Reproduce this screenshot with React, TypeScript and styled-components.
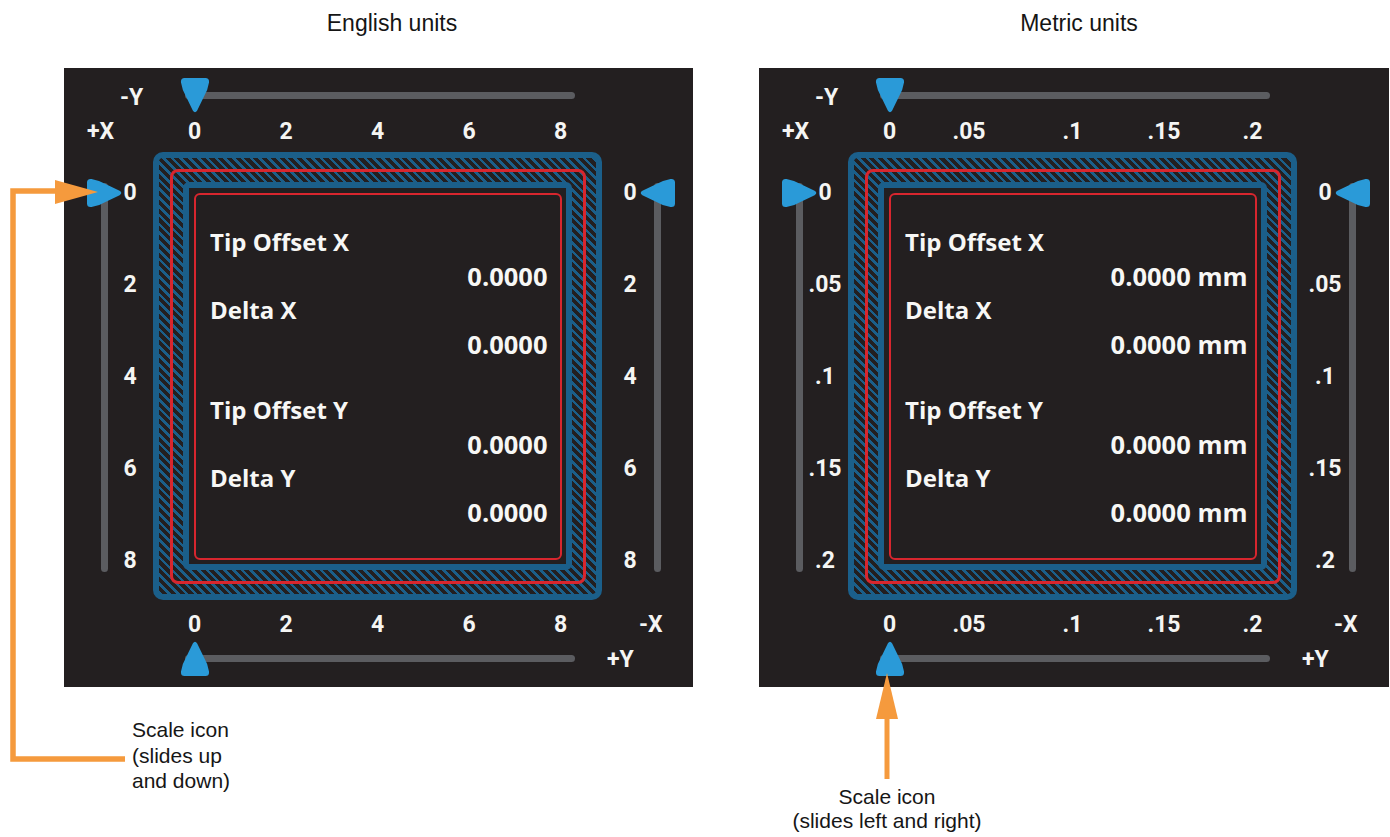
import React from 'react';
import styled, { createGlobalStyle } from 'styled-components';

const GlobalStyle = createGlobalStyle`
  html, body { margin: 0; padding: 0; background: #ffffff; }
  body {
    width: 1390px;
    height: 837px;
    overflow: hidden;
    font-family: "Liberation Sans", Arial, sans-serif;
  }
`;

const PANEL_BG = '#231f20';
const FRAME_BLUE = '#1b5f8a';
const RED = '#d8262e';
const THUMB_BLUE = '#2a9ad8';
const TRACK = '#5b5c60';
const ORANGE = '#f59a3d';

const Page = styled.main`
  position: relative;
  width: 1390px;
  height: 837px;
  box-sizing: border-box;
  padding-left: 64px;
  display: flex;
  gap: 66px;
`;

const Figure = styled.section<{ $w: number }>`
  width: ${(p) => p.$w}px;
  display: flex;
  flex-direction: column;
`;

const Title = styled.h2<{ $pad: number }>`
  margin: 10px 0 0;
  padding-left: ${(p) => p.$pad}px;
  font: 400 23px/26px "Liberation Sans", Arial, sans-serif;
  color: #151515;
  text-align: center;
`;

const Panel = styled.div`
  margin-top: 32px;
  height: 619px;
  background: ${PANEL_BG};
  display: grid;
  grid-template-columns: 47px 42px 449px 52px 1fr;
  grid-template-rows: 40px 44px 448px 44px 43px;
  font-family: Roboto, "Noto Sans", sans-serif;
  color: #f5f5f3;
`;

const AxisTag = styled.div<{ $col: string; $row: number; $ml: number; $mt: number }>`
  grid-column: ${(p) => p.$col};
  grid-row: ${(p) => p.$row};
  justify-self: start;
  align-self: start;
  margin-left: ${(p) => p.$ml}px;
  margin-top: ${(p) => p.$mt}px;
  font-size: 23px;
  line-height: 26px;
  font-weight: 700;
  white-space: nowrap;
`;

const TickRow = styled.div<{ $row: number; $mt: number }>`
  grid-column: 3;
  grid-row: ${(p) => p.$row};
  align-self: start;
  margin-top: ${(p) => p.$mt}px;
  margin-left: 16.5px;
  width: 416px;
  display: flex;
  justify-content: space-between;
`;

const TickCol = styled.div<{ $col: number; $pl: number; $pr: number }>`
  grid-column: ${(p) => p.$col};
  grid-row: 3;
  padding-top: 27.5px;
  padding-left: ${(p) => p.$pl}px;
  padding-right: ${(p) => p.$pr}px;
  height: 394px;
  display: flex;
  flex-direction: column;
  justify-content: space-between;
  align-items: center;
`;

const Tick = styled.span<{ $shift?: number }>`
  display: block;
  width: 50px;
  height: 26px;
  text-align: center;
  font-size: 23px;
  line-height: 26px;
  font-weight: 700;
  white-space: nowrap;
  transform: translateX(${(p) => p.$shift ?? 0}px);
`;

const HTrack = styled.div<{ $row: number; $mt: number }>`
  grid-column: 3;
  grid-row: ${(p) => p.$row};
  align-self: start;
  justify-self: start;
  position: relative;
  margin-top: ${(p) => p.$mt}px;
  margin-left: 32px;
  width: 390px;
  height: 7px;
  border-radius: 4px;
  background: ${TRACK};
`;

const VTrack = styled.div<{ $col: number; $ml: number }>`
  grid-column: ${(p) => p.$col};
  grid-row: 3;
  align-self: start;
  justify-self: start;
  position: relative;
  margin-top: 31px;
  margin-left: ${(p) => p.$ml}px;
  width: 7px;
  height: 389px;
  border-radius: 4px;
  background: ${TRACK};
`;

const ThumbSvg = styled.svg<{ $rot: number; $h: boolean }>`
  position: absolute;
  width: 36px;
  height: 36px;
  left: ${(p) => (p.$h ? '-8.5px' : '-14.5px')};
  top: ${(p) => (p.$h ? '-14.5px' : '-8.5px')};
  transform: rotate(${(p) => p.$rot}deg);
`;

const Thumb = ({ rot, h }: { rot: number; h: boolean }) => (
  <ThumbSvg $rot={rot} $h={h} viewBox="0 0 36 36">
    <path
      d="M7.5 1 L28.5 1 Q32.5 1 32 5.5 Q31 13 26.5 20.5 L20.2 33.6 Q18 37 15.8 33.6 L9.5 20.5 Q5 13 4 5.5 Q3.5 1 7.5 1 Z"
      fill={THUMB_BLUE}
    />
  </ThumbSvg>
);

const Frame = styled.div`
  grid-column: 3;
  grid-row: 3;
  box-sizing: border-box;
  border: 6px solid ${FRAME_BLUE};
  border-radius: 10px;
  padding: 10.5px;
  background: repeating-linear-gradient(
    45deg,
    ${FRAME_BLUE} 0px,
    ${FRAME_BLUE} 2.6px,
    ${PANEL_BG} 2.6px,
    ${PANEL_BG} 6.2px
  );
`;

const RedRing = styled.div`
  box-sizing: border-box;
  height: 100%;
  border: 3px solid ${RED};
  border-radius: 8px;
  padding: 10.5px;
`;

const InnerBlue = styled.div`
  box-sizing: border-box;
  height: 100%;
  border: 6px solid ${FRAME_BLUE};
  border-radius: 6px;
  padding: 4.5px;
  background: ${PANEL_BG};
`;

const InnerRed = styled.div<{ $pr: number }>`
  box-sizing: border-box;
  height: 100%;
  border: 2.5px solid ${RED};
  border-radius: 6px;
  padding: 30px ${(p) => p.$pr}px 0 14.5px;
  display: flex;
  flex-direction: column;
  gap: 32px;
  font-family: "Open Sans", "Noto Sans", sans-serif;
  font-weight: 700;
  font-size: 24px;
  line-height: 34px;
  color: #f7f7f5;
`;

const Group = styled.div`
  display: flex;
  flex-direction: column;
`;

const Label = styled.div`
  letter-spacing: 0;
`;

const Value = styled.div`
  text-align: right;
  font-size: 25.5px;
  letter-spacing: 0;
`;

const Note = styled.p<{ $ml: number; $w: number; $mt: number; $lh: number; $align: string }>`
  margin: ${(p) => p.$mt}px 0 0 ${(p) => p.$ml}px;
  width: ${(p) => p.$w}px;
  font: 400 21px/${(p) => p.$lh}px "Liberation Sans", Arial, sans-serif;
  color: #161616;
  text-align: ${(p) => p.$align};
`;

const Overlay = styled.svg`
  position: absolute;
  left: 0;
  top: 0;
  width: 1390px;
  height: 837px;
  pointer-events: none;
`;

type Tk = { t: string; s?: number };

const ScalePanel = ({
  h,
  v,
  unit,
  pr,
}: {
  h: Tk[];
  v: Tk[];
  unit: string;
  pr: number;
}) => (
  <Panel>
    <AxisTag $col="2" $row={1} $ml={9} $mt={16.5}>-Y</AxisTag>
    <HTrack $row={1} $mt={23.5}>
      <Thumb rot={0} h />
    </HTrack>

    <AxisTag $col="1 / 3" $row={2} $ml={23} $mt={10.5}>+X</AxisTag>
    <TickRow $row={2} $mt={10.5}>
      {h.map((k, i) => (
        <Tick key={i} $shift={k.s}>{k.t}</Tick>
      ))}
    </TickRow>

    <VTrack $col={1} $ml={36.5}>
      <Thumb rot={-90} h={false} />
    </VTrack>
    <TickCol $col={2} $pl={0} $pr={4}>
      {v.map((k, i) => (
        <Tick key={i}>{k.t}</Tick>
      ))}
    </TickCol>

    <Frame>
      <RedRing>
        <InnerBlue>
          <InnerRed $pr={pr}>
            <Group>
              <Label>Tip Offset X</Label>
              <Value>0.0000{unit}</Value>
              <Label>Delta X</Label>
              <Value>0.0000{unit}</Value>
            </Group>
            <Group>
              <Label>Tip Offset Y</Label>
              <Value>0.0000{unit}</Value>
              <Label>Delta Y</Label>
              <Value>0.0000{unit}</Value>
            </Group>
          </InnerRed>
        </InnerBlue>
      </RedRing>
    </Frame>

    <TickCol $col={4} $pl={4} $pr={0}>
      {v.map((k, i) => (
        <Tick key={i}>{k.t}</Tick>
      ))}
    </TickCol>
    <VTrack $col={5} $ml={0}>
      <Thumb rot={90} h={false} />
    </VTrack>

    <TickRow $row={4} $mt={12}>
      {h.map((k, i) => (
        <Tick key={i} $shift={k.s}>{k.t}</Tick>
      ))}
    </TickRow>
    <AxisTag $col="4 / 6" $row={4} $ml={37} $mt={12}>-X</AxisTag>

    <HTrack $row={5} $mt={11}>
      <Thumb rot={180} h />
    </HTrack>
    <AxisTag $col="4" $row={5} $ml={5} $mt={3}>+Y</AxisTag>
  </Panel>
);

const english: Tk[] = [{ t: '0' }, { t: '2' }, { t: '4' }, { t: '6' }, { t: '8' }];
const metricH: Tk[] = [{ t: '0' }, { t: '.05', s: -12 }, { t: '.1' }, { t: '.15' }, { t: '.2', s: -3 }];
const metricV: Tk[] = [{ t: '0' }, { t: '.05' }, { t: '.1' }, { t: '.15' }, { t: '.2' }];

export default function App() {
  return (
    <>
      <GlobalStyle />
      <Page>
        <Figure $w={629}>
          <Title $pad={27}>English units</Title>
          <ScalePanel h={english} v={english} unit="" pr={12} />
          <Note $ml={68} $w={200} $mt={30} $lh={25.5} $align="left">
            Scale icon
            <br />
            (slides up
            <br />
            and down)
          </Note>
        </Figure>
        <Figure $w={630}>
          <Title $pad={10}>Metric units</Title>
          <ScalePanel h={metricH} v={metricV} unit=" mm" pr={7} />
          <Note $ml={0} $w={256} $mt={98} $lh={24} $align="center">
            Scale icon
            <br />
            (slides left and right)
          </Note>
        </Figure>
        <Overlay viewBox="0 0 1390 837">
          <polyline
            points="125,759 13,759 13,191 57,191"
            fill="none"
            stroke={ORANGE}
            strokeWidth={5.5}
            strokeLinejoin="miter"
          />
          <polygon points="55,180 98,192 55,204" fill={ORANGE} />
          <line x1={887} y1={779} x2={887} y2={716} stroke={ORANGE} strokeWidth={5} />
          <polygon points="876,719 898,719 887,673" fill={ORANGE} />
        </Overlay>
      </Page>
    </>
  );
}
